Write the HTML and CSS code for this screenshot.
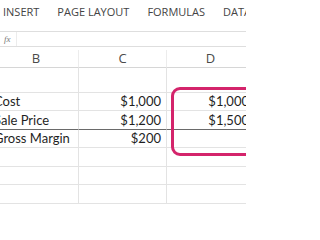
FILE: index.html
```html
<!DOCTYPE html>
<html>
<head>
<meta charset="utf-8">
<link rel="stylesheet" href="styles.css">
</head>
<body>
<div class="app">
  <div class="ribbon">
    <span class="tab">INSERT</span>
    <span class="tab">PAGE LAYOUT</span>
    <span class="tab">FORMULAS</span>
    <span class="tab">DATA</span>
  </div>
  <div class="fbar">
    <div class="fx">fx</div>
    <div class="finput"></div>
  </div>
  <div class="sheet">
    <div class="grid">
      <div class="hd">B</div><div class="hd">C</div><div class="hd">D</div>
      <div class="c r1"></div><div class="c r1"></div><div class="c r1 last"></div>
      <div class="c r2">Cost</div><div class="c r2 num">$1,000</div><div class="c r2 num last">$1,000</div>
      <div class="c r3 thick">Sale Price</div><div class="c r3 num thick">$1,200</div><div class="c r3 num thick last">$1,500</div>
      <div class="c r2">Gross Margin</div><div class="c r2 num">$200</div><div class="c r2 num last"></div>
      <div class="c r3"></div><div class="c r3"></div><div class="c r3 last"></div>
      <div class="c r2"></div><div class="c r2"></div><div class="c r2 last"></div>
      <div class="c r3"></div><div class="c r3"></div><div class="c r3 last"></div>
    </div>
    <div class="highlight"></div>
  </div>
</div>
</body>
</html>
```
FILE: styles.css
```css
html, body {
  margin: 0;
  padding: 0;
  background: #fff;
}
.app {
  width: 246px;
  height: 205px;
  overflow: hidden;
  position: relative;
}
.ribbon {
  height: 31px;
  display: flex;
  align-items: flex-start;
  gap: 18px;
  padding-left: 3px;
  font-family: "Open Sans", sans-serif;
  font-size: 11px;
  line-height: 15px;
  color: #444;
  box-sizing: border-box;
  padding-top: 4px;
  white-space: nowrap;
}
.fbar {
  height: 16px;
  box-sizing: border-box;
  border-top: 1px solid #dedede;
  border-bottom: 1px solid #dedede;
  display: flex;
}
.fx {
  width: 17px;
  border-right: 1px solid #ececec;
  box-sizing: border-box;
  font-family: "Liberation Serif", serif;
  font-style: italic;
  font-size: 9px;
  line-height: 14px;
  color: #777;
  padding-left: 4px;
}
.finput {
  flex: 1;
}
.sheet {
  position: relative;
  margin-top: 3px;
}
.grid {
  display: grid;
  grid-template-columns: 85px 88px 88px;
  margin-left: -6px;
  width: 261px;
  font-family: Lato, sans-serif;
  font-size: 13px;
  color: #1f1f1f;
}
.hd {
  height: 18px;
  box-sizing: border-box;
  border-bottom: 1px solid #d6d6d6;
  border-right: 1px solid #ececec;
  text-align: center;
  font-family: "Open Sans", sans-serif;
  font-size: 13px;
  line-height: 17px;
  color: #4a4a4a;
}
.c {
  box-sizing: border-box;
  border-bottom: 1px solid #e3e3e3;
  border-right: 1px solid #e3e3e3;
  display: flex;
  align-items: flex-end;
  padding-bottom: 1px;
  line-height: 15px;
  white-space: nowrap;
  overflow: hidden;
}
.r1 { height: 25px; }
.r2 { height: 18px; }
.r3 { height: 19px; }
.num {
  justify-content: flex-end;
  padding-right: 5px;
}
.thick {
  border-bottom-color: #6a6a6a;
}
.highlight {
  position: absolute;
  left: 171px;
  top: 37px;
  width: 100px;
  height: 69px;
  box-sizing: border-box;
  border: 3px solid #d4246b;
  border-radius: 9px;
}
```
